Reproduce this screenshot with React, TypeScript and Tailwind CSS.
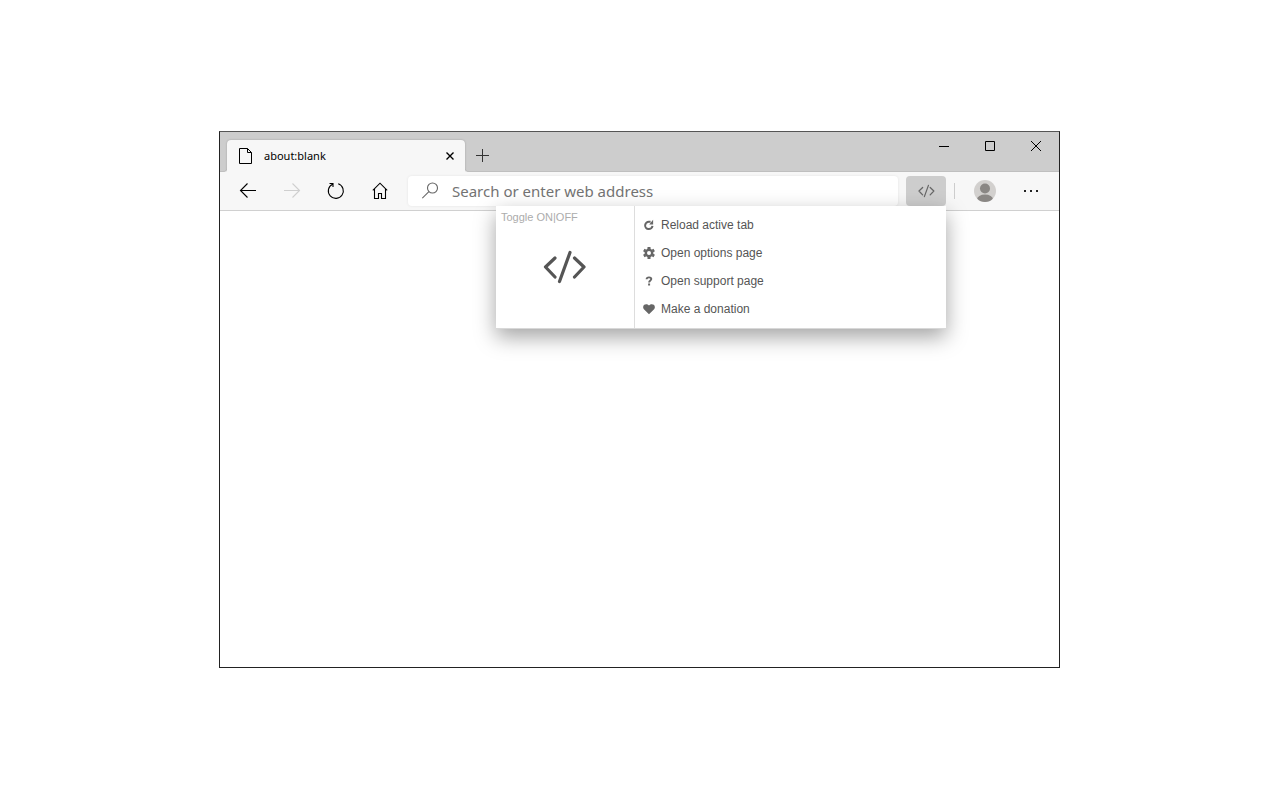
import { useState } from 'react';
import type { ReactNode } from 'react';

const CodeIcon = ({ className }: { className: string }) => (
  <svg viewBox="0 0 44 34" fill="none" stroke="currentColor" strokeWidth="3.200" strokeLinecap="round" strokeLinejoin="round" className={className}>
    <path d="M12 8 2.500 17 12 27M31.500 8 41 17 31.500 27M27 2.500 16.500 31.500" />
  </svg>
);

const PageIcon = () => (
  <svg viewBox="0 0 13 16" fill="none" stroke="#000" className="h-4 w-[13px]">
    <path d="M.5.5h8l4 4v11H.5zM8.500.5v4h4" />
  </svg>
);

const ReloadGlyph = () => (
  <svg viewBox="0 0 12 12" className="size-3">
    <path d="M9.500 6.800A3.700 3.700 0 1 1 6 2.700h1.600" fill="none" stroke="currentColor" strokeWidth="2" />
    <path d="M6.200 5.600h3.900V.8z" fill="currentColor" />
  </svg>
);

const GearGlyph = () => (
  <svg viewBox="0 0 12 12" className="size-3">
    <circle cx="6" cy="6" r="3.200" fill="none" stroke="currentColor" strokeWidth="2.400" />
    <path
      d="M6 0v2M6 10v2M.8 3l1.800 1M9.400 8l1.800 1M.8 9l1.800-1M9.400 4l1.800-1"
      stroke="currentColor"
      strokeWidth="3"
    />
  </svg>
);

const QuestionGlyph = () => (
  <svg viewBox="0 0 12 12" className="size-3">
    <path d="M3.600 4.200C3.700 2.800 4.800 2.400 6 2.400c1.300 0 2.300.6 2.300 1.700C8.300 5.500 6.100 5.400 6.100 7.500" fill="none" stroke="currentColor" strokeWidth="1.900" />
    <path d="M5.100 8.500h2v2h-2z" fill="currentColor" />
  </svg>
);

const HeartGlyph = () => (
  <svg viewBox="0 0 12 12" className="size-3">
    <path d="M6 11.200.9 6.200C-.3 5 0 2.800 1.200 1.800 2.700.7 4.700 1.100 6 2.500c1.300-1.400 3.300-1.800 4.800-.7C12 2.800 12.300 5 11.100 6.200z" fill="currentColor" />
  </svg>
);

const menuItems = [
  { label: 'Reload active tab', icon: <ReloadGlyph /> },
  { label: 'Open options page', icon: <GearGlyph /> },
  { label: 'Open support page', icon: <QuestionGlyph /> },
  { label: 'Make a donation', icon: <HeartGlyph /> },
];

const ToolButton = ({ label, disabled, children }: { label: string; disabled?: boolean; children: ReactNode }) => (
  <button aria-label={label} disabled={disabled} className="flex h-[30px] w-10 items-center justify-center text-black disabled:text-[#cfcfcf]">
    <svg viewBox="0 0 18 18" fill="none" stroke="currentColor" strokeWidth="1.100" className="size-[18px]">
      {children}
    </svg>
  </button>
);

const WindowButton = ({ label, children }: { label: string; children: ReactNode }) => (
  <button aria-label={label} className="flex h-7 w-[46px] items-center justify-center">
    <svg viewBox="0 0 10 10" fill="none" stroke="#000" className="size-2.5">
      {children}
    </svg>
  </button>
);

const Popup = ({ enabled, onToggle }: { enabled: boolean; onToggle: () => void }) => (
  <div className="absolute top-full right-0 z-10 flex w-[450px] border-b border-[#d8d8d8] bg-white font-['Liberation_Sans',Arial,sans-serif] text-[#555] shadow-[0_8px_20px_rgba(0,0,0,0.36)]">
    <button onClick={onToggle} aria-pressed={enabled} className="flex w-[139px] flex-col items-start border-r border-[#dddddd]">
      <span className="px-[5px] pt-1 text-[11px] leading-[14px] text-[#acacac]">Toggle ON|OFF</span>
      <span className="flex w-full flex-1 justify-center pt-[26px]">
        <CodeIcon className="h-[34px] w-11" />
      </span>
    </button>
    <ul className="flex-1 py-[5px]">
      {menuItems.map(item => (
        <li key={item.label}>
          <button className="flex h-7 w-full items-center gap-1.5 px-2 text-xs">
            <span className="text-[#666]">{item.icon}</span>
            {item.label}
          </button>
        </li>
      ))}
    </ul>
  </div>
);

const App = () => {
  const [open, setOpen] = useState(true);
  const [enabled, setEnabled] = useState(true);

  return (
    <div className="flex min-h-screen items-center justify-center bg-white pr-px pb-px font-['Noto_Sans','Open_Sans',sans-serif]">
      <main className="flex min-h-[537px] w-full max-w-[841px] flex-col border border-[#222] border-t-[#555] bg-white">
        {/* Title bar */}
        <header className="flex h-10 bg-[#f7f7f7]">
          <div className="w-[7px] rounded-br-sm bg-[#cdcdcd] shadow-[inset_0_-1px_0_#bfbfbf]" />
          <div className="relative bg-[#cdcdcd] pt-2">
            <div className="flex h-8 w-[238px] items-center rounded-t bg-[#f7f7f7] pr-2.5 pl-3 shadow-[0_0_2px_rgba(0,0,0,0.25)]">
              <PageIcon />
              <span className="flex-1 pl-3 text-[11px] text-black">about:blank</span>
              <button aria-label="Close tab">
                <svg viewBox="0 0 10 10" stroke="#000" strokeWidth="1.400" className="size-2.5">
                  <path d="M1.500 1.500l7 7M8.500 1.500l-7 7" />
                </svg>
              </button>
            </div>
          </div>
          <div className="flex flex-1 items-end justify-between rounded-bl-sm bg-[#cdcdcd] shadow-[inset_0_-1px_0_#bfbfbf]">
            <button aria-label="New tab" className="flex h-[33px] w-[35px] items-center justify-center">
              <svg viewBox="0 0 13 13" stroke="#333" className="size-[13px]">
                <path d="M6.500 0v13M0 6.500h13" />
              </svg>
            </button>
            <div className="flex self-start">
              <WindowButton label="Minimize"><path d="M0 5.500h10" /></WindowButton>
              <WindowButton label="Maximize"><path d="M.5.5h9v9h-9z" /></WindowButton>
              <WindowButton label="Close"><path d="M0 0l10 10M10 0 0 10" /></WindowButton>
            </div>
          </div>
        </header>

        {/* Toolbar */}
        <div className="relative flex h-[39px] items-start border-b border-[#d0d0d0] bg-[#f7f7f7] px-2 pt-1">
          <nav className="flex gap-1">
            <ToolButton label="Back"><path d="M17 8.500H1.500M8.500 1.500l-7 7 7 7" /></ToolButton>
            <ToolButton label="Forward" disabled><path d="M1 8.500h15.500M9.500 1.500l7 7-7 7" /></ToolButton>
            <ToolButton label="Refresh"><path d="M11.200 1.800A7.500 7.500 0 1 1 5.500 2.200M2.500 1.500h3.500v3.500" /></ToolButton>
            <ToolButton label="Home"><path d="M1.800 8.300 9 1.200 16.200 8.300M3.500 6.800v9.700h4v-5h3v5h4V6.800" /></ToolButton>
          </nav>
          <label className="ml-2 flex h-[30px] min-w-0 flex-1 items-center gap-3 rounded bg-white pl-3.5 shadow-[0_0_3px_rgba(0,0,0,0.08)]">
            <svg viewBox="0 0 18 18" fill="none" stroke="#666" strokeWidth="1.100" className="size-[18px] shrink-0">
              <circle cx="10.500" cy="6" r="5" />
              <path d="M6.900 9.600.3 16.200" />
            </svg>
            <input
              aria-label="Search or enter web address"
              placeholder="Search or enter web address"
              className="min-w-0 flex-1 text-[15px] leading-5 outline-none placeholder:text-[#737373]"
            />
          </label>
          <div className="relative ml-2">
            <button
              onClick={() => setOpen(!open)}
              aria-label="Extension"
              aria-expanded={open}
              className="flex h-[30px] w-10 items-center justify-center rounded-sm bg-[#cdcdcd] text-[#666]"
            >
              <CodeIcon className="h-[14px] w-[17px]" />
            </button>
            {open && <Popup enabled={enabled} onToggle={() => setEnabled(!enabled)} />}
          </div>
          <div className="mt-[7px] ml-2 h-4 w-px bg-[#cdcdcd]" />
          <button aria-label="Profile" className="ml-2.5 flex h-[30px] w-10 items-center justify-center">
            <svg viewBox="0 0 22 22" className="size-[22px]">
              <clipPath id="avatar"><circle cx="11" cy="11" r="11" /></clipPath>
              <g clipPath="url(#avatar)">
                <path d="M0 0h22v22H0z" fill="#d2d0ce" />
                <circle cx="11" cy="8.500" r="5" fill="#8a8784" />
                <ellipse cx="11" cy="19.500" rx="8" ry="5" fill="#8a8784" />
              </g>
            </svg>
          </button>
          <button aria-label="Settings and more" className="ml-1.5 flex h-[30px] w-10 items-center justify-center">
            <svg viewBox="0 0 14 2" fill="#222" className="h-0.5 w-3.5">
              <path d="M0 0h2v2H0zM6 0h2v2H6zM12 0h2v2h-2z" />
            </svg>
          </button>
        </div>
      </main>
    </div>
  );
};

export default App;
